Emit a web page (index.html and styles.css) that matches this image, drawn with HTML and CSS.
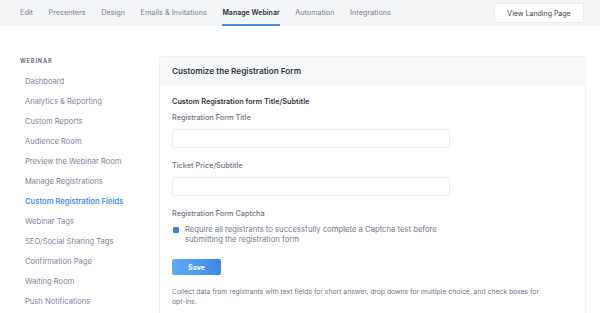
FILE: index.html
```html
<!DOCTYPE html>
<html lang="en">
<head>
    <meta charset="UTF-8">
    <meta name="viewport" content="width=device-width, initial-scale=1.0">
    <title>Custom Registration Fields</title>
    <link rel="stylesheet" href="styles.css">
</head>
<body>
    <div class="topnav">
        <div class="tabs">
            <a class="tab">Edit</a>
            <a class="tab">Presenters</a>
            <a class="tab">Design</a>
            <a class="tab">Emails &amp; Invitations</a>
            <a class="tab active">Manage Webinar</a>
            <a class="tab">Automation</a>
            <a class="tab">Integrations</a>
        </div>
        <button class="landing-btn">View Landing Page</button>
    </div>

    <div class="main">
        <div class="sidebar">
            <div class="side-title">WEBINAR</div>
            <a class="side-link">Dashboard</a>
            <a class="side-link">Analytics &amp; Reporting</a>
            <a class="side-link">Custom Reports</a>
            <a class="side-link">Audience Room</a>
            <a class="side-link">Preview the Webinar Room</a>
            <a class="side-link">Manage Registrations</a>
            <a class="side-link active">Custom Registration Fields</a>
            <a class="side-link">Webinar Tags</a>
            <a class="side-link">SEO/Social Sharing Tags</a>
            <a class="side-link">Confirmation Page</a>
            <a class="side-link">Waiting Room</a>
            <a class="side-link">Push Notifications</a>
        </div>

        <div class="card">
            <div class="card-head">Customize the Registration Form</div>
            <div class="card-body">
                <h4>Custom Registration form Title/Subtitle</h4>

                <label class="field-label">Registration Form Title</label>
                <input class="field" type="text">

                <label class="field-label">Ticket Price/Subtitle</label>
                <input class="field" type="text">

                <label class="field-label">Registration Form Captcha</label>
                <div class="check-row">
                    <span class="checkbox"></span>
                    <span>Require all registrants to successfully complete a Captcha test before submitting the registration form</span>
                </div>

                <button class="save-btn">Save</button>

                <p class="note">Collect data from registrants with text fields for short answer, drop downs for multiple choice, and check boxes for opt-ins.</p>
            </div>
        </div>
    </div>
</body>
</html>
```

FILE: styles.css
```css
body {
    margin: 0;
    font-family: Inter, 'Noto Sans', sans-serif;
    background: #fff;
    color: #2e3240;
    overflow: hidden;
}
a {
    text-decoration: none;
}
.topnav {
    height: 26px;
    background: #f4f5f7;
    display: flex;
    align-items: center;
    justify-content: space-between;
    padding: 0 16px 0 20px;
}
.tabs {
    display: flex;
    gap: 15.5px;
    height: 100%;
}
.tab {
    font-size: 7.3px;
    color: #7c8190;
    display: flex;
    align-items: center;
    height: 100%;
    box-sizing: border-box;
    border-bottom: 2px solid transparent;
    padding-top: 1px;
}
.tab.active {
    font-size: 7px;
    color: #2e3240;
    font-weight: 600;
    border-bottom-color: #4a90e2;
}
.landing-btn {
    font-family: inherit;
    font-size: 7px;
    color: #3a3e4a;
    background: #fff;
    border: 1px solid #eceef2;
    border-radius: 2px;
    width: 90px;
    height: 20px;
    padding: 0;
}
.main {
    display: flex;
    align-items: flex-start;
}
.sidebar {
    width: 139px;
    padding: 30px 0 0 20px;
    display: flex;
    flex-direction: column;
}
.side-title {
    font-size: 5.5px;
    font-weight: 700;
    letter-spacing: 0.9px;
    color: #6c7184;
    line-height: 10px;
    margin-bottom: 6px;
}
.side-link {
    font-size: 7.6px;
    color: #80859a;
    line-height: 20px;
    padding-left: 5px;
}
.side-link.active {
    color: #4a90e2;
    font-weight: 600;
}
.card {
    width: 425px;
    margin-top: 30px;
    border: 1px solid #f0f1f4;
    border-bottom: none;
    border-radius: 3px 3px 0 0;
    height: 257px;
}
.card-head {
    background: #f8f9fb;
    height: 28px;
    line-height: 28px;
    padding-left: 12px;
    font-size: 8.2px;
    font-weight: 600;
    color: #2e3240;
}
.card-body {
    padding: 10px 12px 0 12px;
    display: flex;
    flex-direction: column;
    align-items: flex-start;
}
.card-body h4 {
    margin: 0;
    font-size: 7.3px;
    font-weight: 600;
    line-height: 13px;
    color: #2e3240;
}
.field-label {
    font-size: 7.3px;
    font-weight: 500;
    color: #70768a;
    line-height: 12px;
    margin-top: 4px;
}
.field {
    width: 278px;
    height: 19px;
    box-sizing: border-box;
    border: 1px solid #eceef2;
    border-radius: 2px;
    margin: 5px 0 8px 0;
}
.check-row {
    display: flex;
    gap: 6px;
    font-size: 7.7px;
    line-height: 10px;
    color: #747a8c;
    width: 280px;
    margin-top: 5px;
}
.checkbox {
    flex: none;
    width: 6px;
    height: 6px;
    margin: 2px 0 0 1px;
    background: #3d85e6;
    border-radius: 1px;
}
.save-btn {
    margin-top: 14px;
    width: 49px;
    height: 16px;
    border: none;
    border-radius: 2px;
    background: linear-gradient(90deg, #5eacf5, #3e87e6);
    color: #fff;
    font-family: inherit;
    font-size: 7px;
    font-weight: 700;
    padding: 0;
}
.note {
    margin: 12px 0 0 0;
    font-size: 6.8px;
    line-height: 10px;
    color: #70768a;
    width: 370px;
    hyphens: none;
}
```
